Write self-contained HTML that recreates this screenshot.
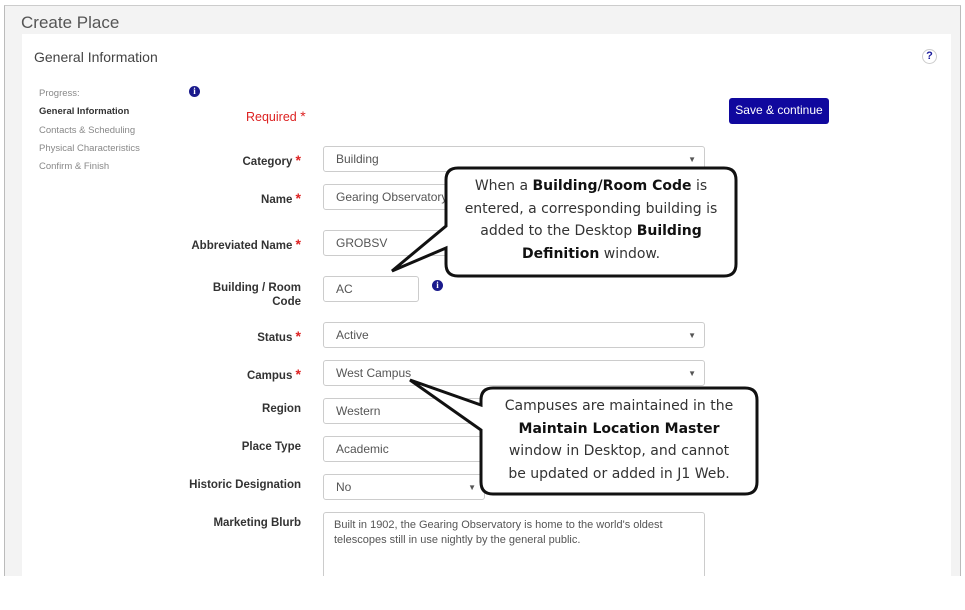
<!DOCTYPE html>
<html><head><meta charset="utf-8"><style>
*{margin:0;padding:0;box-sizing:border-box}
body{width:965px;height:610px;background:#fff;position:relative;overflow:hidden;font-family:"Liberation Sans",Arial,sans-serif}
.outer{position:absolute;left:4px;top:5px;width:957px;height:571px;background:#f3f3f3;border-left:1px solid #bbb;border-top:1px solid #ccc;border-right:1px solid #bbb}
.panel{position:absolute;left:22px;top:34px;width:929px;height:542px;background:#fff}
.a{position:absolute;white-space:nowrap}
.lbl{position:absolute;right:664px;font-size:11.5px;font-weight:bold;color:#333;text-align:right}
.star{color:#d22;font-size:14px}
.box{position:absolute;left:323px;width:382px;height:26px;border:1px solid #ccc;border-radius:3px;background:#fff;font-size:12px;color:#555;padding:5px 12px}
.arr{position:absolute;right:8px;top:8px;font-size:8px;color:#555}
.prog{position:absolute;left:39px;font-size:9.5px;color:#888}
.info{position:absolute;width:11px;height:11px;border-radius:50%;background:#1a1a8c;color:#fff;font:bold 9px "Liberation Serif",serif;text-align:center;line-height:11px}
.co{position:absolute;font-family:"DejaVu Sans","Liberation Sans",sans-serif;font-size:14px;color:#333;text-align:center;line-height:22.5px}
.co b{color:#111}
</style></head><body>
<div class="outer"></div>
<div class="panel"></div>
<div class="a" style="left:21px;top:13px;font-size:17px;color:#555">Create Place</div>
<div class="a" style="left:34px;top:49px;font-size:14px;color:#444">General Information</div>
<div class="a" style="left:922px;top:49px;width:15px;height:15px;border:1px solid #ccc;border-radius:50%;font-size:11px;font-weight:bold;color:#1a1a9c;text-align:center;line-height:13px">?</div>
<div class="prog" style="top:88px">Progress:</div>
<div class="prog" style="top:106px;color:#333;font-weight:bold">General Information</div>
<div class="prog" style="top:125px">Contacts &amp; Scheduling</div>
<div class="prog" style="top:143px">Physical Characteristics</div>
<div class="prog" style="top:161px">Confirm &amp; Finish</div>
<div class="info" style="left:189px;top:86px">i</div>
<div class="a" style="left:246px;top:108px;font-size:12.5px;color:#d22">Required <span class="star">*</span></div>
<div class="a" style="left:729px;top:98px;width:100px;height:26px;background:#10089e;border-radius:3px;color:#fff;font-size:12px;text-align:center;line-height:25px">Save &amp; continue</div>

<div class="lbl" style="top:152px">Category <span class="star">*</span></div>
<div class="box" style="top:146px">Building<span class="arr">▼</span></div>
<div class="lbl" style="top:190px">Name <span class="star">*</span></div>
<div class="box" style="top:184px">Gearing Observatory</div>
<div class="lbl" style="top:236px">Abbreviated Name <span class="star">*</span></div>
<div class="box" style="top:230px">GROBSV</div>
<div class="lbl" style="top:281px;line-height:14px">Building / Room<br>Code</div>
<div class="box" style="top:276px;width:96px">AC</div>
<div class="info" style="left:432px;top:280px">i</div>
<div class="lbl" style="top:328px">Status <span class="star">*</span></div>
<div class="box" style="top:322px">Active<span class="arr">▼</span></div>
<div class="lbl" style="top:366px">Campus <span class="star">*</span></div>
<div class="box" style="top:360px">West Campus<span class="arr">▼</span></div>
<div class="lbl" style="top:403px">Region</div>
<div class="box" style="top:398px">Western</div>
<div class="lbl" style="top:441px">Place Type</div>
<div class="box" style="top:436px">Academic</div>
<div class="lbl" style="top:479px">Historic Designation</div>
<div class="box" style="top:474px;width:162px">No<span class="arr">▼</span></div>
<div class="lbl" style="top:517px">Marketing Blurb</div>
<div class="box" style="top:512px;height:80px;padding:5px 10px;font-size:11px;line-height:15px;white-space:normal">Built in 1902, the Gearing Observatory is home to the world's oldest telescopes still in use nightly by the general public.</div>
<div style="position:absolute;left:0;top:576px;width:965px;height:34px;background:#fff"></div>

<svg style="position:absolute;left:0;top:0" width="965" height="610">
<path d="M458,168 H724 Q736,168 736,180 V264 Q736,276 724,276 H458 Q446,276 446,264 V248 L392,271 L446,226 V180 Q446,168 458,168 Z" fill="#fff" stroke="#111" stroke-width="3"/>
<path d="M493,388 H745 Q757,388 757,400 V482 Q757,494 745,494 H493 Q481,494 481,482 V430 L410,380 L481,405 V400 Q481,388 493,388 Z" fill="#fff" stroke="#111" stroke-width="3"/>
</svg>
<div class="co" style="left:446px;top:175px;width:290px">When a <b>Building/Room Code</b> is<br>entered, a corresponding building is<br>added to the Desktop <b>Building</b><br><b>Definition</b> window.</div>
<div class="co" style="left:481px;top:395px;width:276px">Campuses are maintained in the<br><b>Maintain Location Master</b><br>window in Desktop, and cannot<br>be updated or added in J1 Web.</div>
</body></html>
